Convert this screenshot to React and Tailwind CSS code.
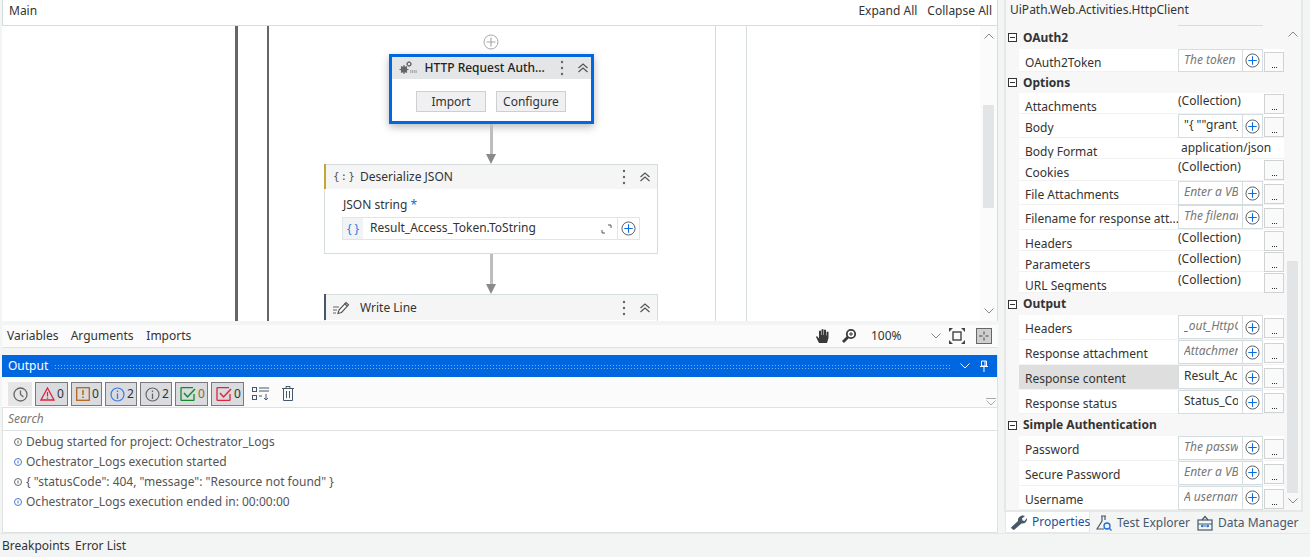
import React from "react";

const Plus = ({ gray = false, size = 16 }) => (
  <svg width={size} height={size} viewBox="0 0 16 16" fill="none">
    <circle cx="8" cy="8" r="7" stroke={gray ? "#a8a8a8" : "#555"} strokeWidth="1" fill="#fff" />
    <path d="M8 3.5v9M3.5 8h9" stroke={gray ? "#a8a8a8" : "#0a6de0"} strokeWidth="1.2" />
  </svg>
);

const Chev = ({ up = false, w = 10, color = "#888" }) => (
  <svg width={w} height="6" viewBox="0 0 10 6" fill="none">
    <path d={up ? "M0.5 5.5L5 1l4.5 4.5" : "M0.5 0.5L5 5l4.5-4.5"} stroke={color} strokeWidth="1" />
  </svg>
);

const DoubleUp = () => (
  <svg width="12" height="10" viewBox="0 0 12 10" fill="none">
    <path d="M1.5 5L6 1l4.5 4M1.5 9L6 5l4.5 4" stroke="#555" strokeWidth="1.2" />
  </svg>
);

const Dots = () => (
  <svg width="4" height="16" viewBox="0 0 4 16">
    <circle cx="2" cy="2" r="1.2" fill="#666" />
    <circle cx="2" cy="8" r="1.2" fill="#666" />
    <circle cx="2" cy="14" r="1.2" fill="#666" />
  </svg>
);

const Arrow = ({ h }) => (
  <div className="flex flex-col items-center" style={{ height: h }}>
    <div className="w-[3px] flex-1 bg-[#bdbdbd]" />
    <svg width="12" height="10" viewBox="0 0 12 10" className="block">
      <path d="M1 0h10L6 10z" fill="#8a8a8a" />
    </svg>
  </div>
);

const Gears = () => (
  <svg width="18" height="14" viewBox="0 0 18 14" fill="none">
    <circle cx="5" cy="8.5" r="3.2" fill="#666" />
    <circle cx="5" cy="8.5" r="1" fill="#e3e5e7" />
    <path d="M5 4v9M.5 8.5h9M2 5.5l6 6M8 5.5l-6 6" stroke="#666" strokeWidth="1.1" />
    <circle cx="10" cy="3" r="1.9" stroke="#666" strokeWidth="1.2" />
    <path d="M10 .3v1M10 4.8v1M7.4 3h1M11.8 3h1" stroke="#666" strokeWidth=".8" />
    <path d="M11 9h7v3h-7z" fill="#aaa" />
    <path d="M12.2 9v3M14.5 9v3M16.8 9v3" stroke="#e3e5e7" strokeWidth=".8" />
  </svg>
);

const PenLines = () => (
  <svg width="17" height="14" viewBox="0 0 17 14" fill="none">
    <path d="M0 6h6M0 9h4M0 12h3" stroke="#666" strokeWidth="1.1" />
    <path d="M5 12.5l1-3.5 7-7.5 2.5 2.300L8.500 11.500z" stroke="#555" strokeWidth="1.200" fill="#fff" />
    <path d="M11.500 2.500l2.600 2.500" stroke="#555" strokeWidth="1.200" />
  </svg>
);

const Row = ({ name, selected = false, children, h }) => (
  <div className="flex bg-white" style={{ height: h }}>
    <div className="w-[13px] shrink-0 bg-[#f7f7f7]" />
    <div className={`w-[159px] shrink-0 pl-[6px] pt-[5px] border-b border-[#f2f2f2] text-[#333] overflow-hidden whitespace-nowrap ${selected ? "bg-[#dedede]" : ""}`}>
      {name}
    </div>
    <div className="flex-1 flex items-start border-b border-[#f2f2f2]">{children}</div>
  </div>
);

const DotsBtn = ({ mt = 3 }) => (
  <div className="w-[20px] h-[20px] ml-[1px] border border-[#cfd3d4] bg-[#fafafa] flex justify-center items-end pb-[3px] gap-[1px]" style={{ marginTop: mt }}>
    <i className="block w-[1px] h-[1px] bg-[#333]" />
    <i className="block w-[1px] h-[1px] bg-[#333]" />
    <i className="block w-[1px] h-[1px] bg-[#333]" />
  </div>
);

const Field = ({ text, italic = true, h }) => (
  <>
    <div className="flex w-[85px] border border-[#d5dde0]" style={{ height: h }}>
      <div className={`w-[63px] shrink-0 pl-[5px] pr-[4px] leading-[20px] overflow-hidden whitespace-nowrap ${italic ? "italic text-[#777]" : "text-[#333]"}`}>
        <div className="overflow-hidden">{text}</div>
      </div>
      <div className="flex-1 border-l border-[#d5dde0] flex items-center justify-center">
        <Plus size={15} />
      </div>
    </div>
    <DotsBtn />
  </>
);

const Collection = () => (
  <>
    <div className="w-[85px] leading-[16px] text-[#333]">(Collection)</div>
    <DotsBtn mt={1} />
  </>
);

const Category = ({ title }) => (
  <div className="flex h-[22px] bg-[#f7f7f7] items-center">
    <div className="w-[13px] shrink-0 pl-[2px]">
      <div className="w-[9px] h-[9px] border border-[#333] flex items-center justify-center bg-white">
        <i className="block w-[5px] h-[1px] bg-[#333]" />
      </div>
    </div>
    <span className="pl-[4px] font-bold text-[#333]">{title}</span>
  </div>
);

const Count = ({ w, n, children, numColor }) => (
  <div className="h-[24px] border border-[#7a7a7a] bg-[#d9dbde] flex items-center pl-[4px] gap-[2px]" style={{ width: w }}>
    {children}
    <span className="text-[12px]" style={{ color: numColor }}>{n}</span>
  </div>
);

const Log = ({ blue, text }) => (
  <div className="flex items-center h-[20px] pl-[10px] text-[#555]">
    <svg width="10" height="10" viewBox="0 0 10 10" fill="none" className="shrink-0 mr-[3px]">
      <circle cx="5" cy="5" r="3.500" stroke={blue ? "#4a78d8" : "#666"} strokeWidth="1" />
      <path d="M5 3.500v3" stroke={blue ? "#4a78d8" : "#666"} strokeWidth="1" />
    </svg>
    <span className="whitespace-nowrap">{text}</span>
  </div>
);

const Scrollbar = ({ top, thumb, gap, thumbW = 11 }) => (
  <div className="w-[17px] shrink-0 bg-[#fbfbfb] flex flex-col items-center">
    <div className="mt-[7px]"><Chev up /></div>
    <div style={{ height: top }} />
    <div className="bg-[#e3e4e6]" style={{ height: thumb, width: thumbW }} />
    <div style={{ height: gap }} />
    <Chev />
  </div>
);

export default function App() {
  return (
    <div className="w-[1310px] h-[557px] overflow-hidden bg-[#f3f5f5] text-[12px] flex flex-col font-['Noto_Sans','Open_Sans',sans-serif]">
      <div className="flex h-[533px]">
        {/* left column */}
        <div className="w-[998px] shrink-0 pl-[2px] flex flex-col">
          <div className="h-[26px] shrink-0 bg-white border-b border-[#d5dde0] border-l border-r flex items-center justify-between pl-[6px] pr-[5px] pb-[3px] text-[#333]">
            <span>Main</span>
            <div className="flex gap-[10px]">
              <span>Expand All</span>
              <span>Collapse All</span>
            </div>
          </div>

          {/* canvas */}
          <div className="h-[295px] shrink-0 flex bg-white overflow-hidden border-r border-[#d5dde0]">
            <div className="relative flex-1 overflow-hidden">
              <div className="absolute left-[233px] top-0 bottom-0 w-[3px] bg-[#666]" />
              <div className="absolute left-[265px] top-0 bottom-0 w-[2px] bg-[#666]" />
              <div className="absolute left-[713px] top-0 bottom-0 w-[1px] bg-[#d5dde0]" />
              <div className="absolute left-[744px] top-0 bottom-0 w-[1px] bg-[#d5dde0]" />

              <div className="relative ml-[322px] w-[334px] flex flex-col items-center pt-[8px]">
                <Plus gray />
                {/* HTTP card */}
                <div className="mt-[4px] w-[205px] h-[70px] border-[3px] border-[#0067e0] bg-white shadow-[0_3px_8px_rgba(0,0,0,0.28)] flex flex-col">
                  <div className="h-[22px] bg-[#e3e5e7] flex items-center pl-[7px] text-[#222]">
                    <Gears />
                    <span className="ml-[8px] w-[125px] text-[12px] font-medium whitespace-nowrap">HTTP Request Auth...</span>
                    <span className="ml-[10px]"><Dots /></span>
                    <span className="ml-[13px]"><DoubleUp /></span>
                  </div>
                  <div className="flex justify-center gap-[10px] pt-[12px]">
                    <div className="w-[70px] h-[21px] border border-[#cfcfd2] bg-[#f0f0f2] flex items-center justify-center text-[#333]">Import</div>
                    <div className="w-[70px] h-[21px] border border-[#cfcfd2] bg-[#f0f0f2] flex items-center justify-center text-[#333]">Configure</div>
                  </div>
                </div>
                <Arrow h={40} />
                {/* Deserialize */}
                <div className="w-[334px] h-[90px] border border-[#d5dde0] bg-white relative">
                  <div className="absolute -left-[1px] -top-[1px] h-[25px] w-[2px] bg-[#c4a732]" />
                  <div className="h-[24px] bg-[#f5f5f5] flex items-center text-[#333]">
                    <span className="w-[35px] pl-[8px] text-[#555] tracking-[1px] font-['DejaVu_Sans_Mono',monospace] text-[11px] whitespace-nowrap">{"{:}"}</span>
                    <span className="w-[262px]">Deserialize JSON</span>
                    <Dots />
                    <span className="ml-[13px]"><DoubleUp /></span>
                  </div>
                  <div className="pl-[18px] pt-[8px] text-[#333] leading-[16px]">
                    JSON string <span className="text-[#0a6de0]">*</span>
                  </div>
                  <div className="ml-[17px] mt-[4px] w-[298px] h-[23px] border border-[#e2e5e7] flex">
                    <div className="w-[20px] bg-[#f2f3f4] text-[#2a7de1] flex items-center justify-center">{"{ }"}</div>
                    <div className="flex-1 pl-[7px] flex items-center text-[#333] pb-[1px]">Result_Access_Token.ToString</div>
                    <div className="w-[22px] flex items-center justify-center">
                      <svg width="11" height="10" viewBox="0 0 11 10" fill="none">
                        <path d="M7 1h3v3M1 6v3h3" stroke="#555" strokeWidth="1" />
                      </svg>
                    </div>
                    <div className="w-[22px] border-l border-[#e2e5e7] flex items-center justify-center">
                      <Plus size={15} />
                    </div>
                  </div>
                </div>
                <Arrow h={40} />
                {/* Write Line */}
                <div className="w-[334px] h-[40px] shrink-0 border border-[#d5dde0] bg-white relative">
                  <div className="absolute -left-[1px] -top-[1px] h-[26px] w-[2px] bg-[#47586a]" />
                  <div className="h-[25px] bg-[#f5f5f5] flex items-center text-[#333]">
                    <span className="w-[35px] pl-[8px]"><PenLines /></span>
                    <span className="w-[262px]">Write Line</span>
                    <Dots />
                    <span className="ml-[13px]"><DoubleUp /></span>
                  </div>
                </div>
              </div>
            </div>
            <Scrollbar top={66} thumb={103} gap={100} />
          </div>

          {/* variables bar */}
          <div className="mt-[4px] h-[23px] shrink-0 bg-[#fbfbfb] border-b border-[#dfe2e3] flex items-center pl-[5px] pr-[6px] text-[#333]">
            <span className="w-[64px]">Variables</span>
            <span className="w-[76px]">Arguments</span>
            <span className="w-[672px]">Imports</span>
            <svg width="16" height="16" viewBox="0 0 16 16" fill="#3a3a3a" className="mr-[10px] shrink-0">
              <path d="M4 15l-3-6 1-1 2 2.500V3l1.300-.5.700 .5v4h.5V1.500L7.800 1l.7.500V7H9V2l1.200-.5.800.5v5.500h.5V4l1.200-.5.800.5v6l-1.500 5z" />
            </svg>
            <svg width="16" height="16" viewBox="0 0 16 16" fill="none" className="mr-[14px] shrink-0">
              <circle cx="10" cy="6" r="4.200" stroke="#3a3a3a" strokeWidth="1.800" />
              <path d="M7 9L2 14" stroke="#3a3a3a" strokeWidth="2.800" />
              <path d="M8 6h4M10 4v4" stroke="#3a3a3a" strokeWidth="1" />
            </svg>
            <span className="w-[60px] shrink-0">100%</span>
            <span className="w-[18px] shrink-0"><Chev /></span>
            <svg width="16" height="16" viewBox="0 0 16 16" fill="none" className="mr-[11px] shrink-0">
              <rect x="4" y="4" width="8" height="8" stroke="#444" strokeWidth="1.400" />
              <path d="M0 0h4L0 4zM16 0h-4l4 4zM0 16h4l-4-4zM16 16h-4l4-4z" fill="#444" />
            </svg>
            <svg width="16" height="16" viewBox="0 0 16 16" className="shrink-0">
              <rect x=".5" y=".5" width="15" height="15" fill="#cfcfcf" stroke="#666" />
              <path d="M6.500 8H3M12.500 8H9.500M8 3.500v3M8 9.500v3" stroke="#444" strokeWidth="1" />
            </svg>
          </div>

          {/* output */}
          <div className="mt-[7px] flex-1 flex flex-col border-r border-[#dfe2e3]">
            <div className="h-[22px] shrink-0 bg-[#0067e0] flex items-center pl-[6px] pr-[8px] text-white">
              <span className="w-[46px]">Output</span>
              <div className="w-[899px] h-[5px] bg-[radial-gradient(circle,#7fb3ef_0.7px,transparent_0.8px)] bg-[length:3px_3px]" />
              <div className="ml-[9px] w-[19px]"><Chev color="#fff" /></div>
              <svg width="10" height="12" viewBox="0 0 10 12" fill="none">
                <path d="M2.500 1h5v5h-5zM1 6.500h8M5 6.500V12M6 1v5" stroke="#fff" strokeWidth="1" />
              </svg>
            </div>
            <div className="h-[30px] shrink-0 bg-[#fbfbfb] flex items-start pt-[5px] pl-[6px] gap-[3px] relative">
              <div className="w-[24px] h-[24px] bg-[#e6e6e6] flex items-center justify-center">
                <svg width="15" height="15" viewBox="0 0 15 15" fill="none">
                  <circle cx="7.500" cy="7.500" r="6.500" stroke="#666" strokeWidth="1.300" />
                  <path d="M7.500 3.500v4l3 2.500" stroke="#666" strokeWidth="1.300" />
                </svg>
              </div>
              <Count w={33} n="0" numColor="#333">
                <svg width="15" height="14" viewBox="0 0 15 14" fill="none">
                  <path d="M7.500 1L14 13H1z" stroke="#e0243c" strokeWidth="1.300" />
                  <path d="M7.500 5v4.500M7.500 10.500v1.200" stroke="#e0243c" strokeWidth="1.200" />
                </svg>
              </Count>
              <Count w={31} n="0" numColor="#333">
                <svg width="14" height="14" viewBox="0 0 14 14" fill="none">
                  <rect x=".7" y=".7" width="12.600" height="12.600" stroke="#b5651d" strokeWidth="1.300" />
                  <path d="M7 3v5M7 9.500V11" stroke="#b5651d" strokeWidth="1.500" />
                </svg>
              </Count>
              <Count w={32} n="2" numColor="#333">
                <svg width="15" height="15" viewBox="0 0 15 15" fill="none">
                  <circle cx="7.500" cy="7.500" r="6.500" stroke="#3f76e0" strokeWidth="1.200" />
                  <path d="M7.500 6.500V12M7.500 3.500v1.500" stroke="#3f76e0" strokeWidth="1.300" />
                </svg>
              </Count>
              <Count w={32} n="2" numColor="#333">
                <svg width="15" height="15" viewBox="0 0 15 15" fill="none">
                  <circle cx="7.500" cy="7.500" r="6.500" stroke="#666" strokeWidth="1.200" />
                  <path d="M7.500 6.500V12M7.500 3.500v1.500" stroke="#666" strokeWidth="1.300" />
                </svg>
              </Count>
              <Count w={33} n="0" numColor="#8a6a2a">
                <svg width="16" height="14" viewBox="0 0 16 14" fill="none">
                  <path d="M14 7v5.500a1 1 0 0 1-1 1H2a1 1 0 0 1-1-1v-11a1 1 0 0 1 1-1h11" stroke="#118a2a" strokeWidth="1.300" />
                  <path d="M4 6l3.500 4L15 2" stroke="#118a2a" strokeWidth="1.500" />
                </svg>
              </Count>
              <Count w={33} n="0" numColor="#333">
                <svg width="16" height="14" viewBox="0 0 16 14" fill="none">
                  <path d="M14 7v5.500a1 1 0 0 1-1 1H2a1 1 0 0 1-1-1v-11a1 1 0 0 1 1-1h11" stroke="#e0243c" strokeWidth="1.300" />
                  <path d="M4 6l3.500 4L15 2" stroke="#e0243c" strokeWidth="1.500" />
                </svg>
              </Count>
              <svg width="17" height="14" viewBox="0 0 17 14" fill="none" className="ml-[5px] mt-[5px]">
                <rect x=".5" y=".5" width="4" height="4" stroke="#47586a" />
                <rect x=".5" y="8.500" width="4" height="4" stroke="#47586a" />
                <path d="M7 1h10M7 4h10M7 9h3M14 7v6M12 11l2 2 2-2" stroke="#47586a" strokeWidth="1" />
              </svg>
              <svg width="12" height="15" viewBox="0 0 12 15" fill="none" className="ml-[10px] mt-[4px]">
                <path d="M0 2.500h12M4 2.500V.5h4v2M1.500 2.500v12h9v-12M4.500 5v7M7.500 5v7" stroke="#47586a" strokeWidth="1" />
              </svg>
              <div className="absolute right-[1px] bottom-[1px] flex flex-col gap-[1px]">
                <i className="block w-[10px] h-[1px] bg-[#aaa]" />
                <Chev color="#aaa" />
              </div>
            </div>
            <div className="h-[24px] shrink-0 bg-white border-y border-l border-[#dfe2e3] flex items-center pl-[5px] italic text-[#777]">Search</div>
            <div className="flex-1 bg-white border-l border-[#dfe2e3] border-b pt-[1px]">
              <Log text="Debug started for project: Ochestrator_Logs" />
              <Log blue text="Ochestrator_Logs execution started" />
              <Log text={'{ "statusCode": 404, "message": "Resource not found" }'} />
              <Log blue text="Ochestrator_Logs execution ended in: 00:00:00" />
            </div>
          </div>
        </div>

        {/* right column */}
        <div className="ml-[6px] w-[299px] shrink-0 flex flex-col">
          <div className="h-[25px] shrink-0 pl-[4px] pt-[1px] bg-[#f7f7f7] text-[#333] border-x-2 border-[#e6e8e8]">UiPath.Web.Activities.HttpClient</div>
          <div className="h-[487px] shrink-0 border-x-2 border-b-2 border-[#e6e8e8] flex bg-[#f7f7f7]">
            <div className="w-[278px] shrink-0 flex flex-col">
              <div className="h-[2px] flex">
                <div className="ml-[172px] w-[85px] border-t border-[#d5dde0]" />
              </div>
              <Category title="OAuth2" />
              <Row name="OAuth2Token" h={23}><Field text="The token" h={23} /></Row>
              <Category title="Options" />
              <Row name="Attachments" h={21}><Collection /></Row>
              <Row name="Body" h={24}><Field text={'"{ ""grant_type'} italic={false} h={24} /></Row>
              <Row name="Body Format" h={21}><span className="pl-[3px] text-[#333] leading-[20px]">application/json</span></Row>
              <Row name="Cookies" h={22}><Collection /></Row>
              <Row name="File Attachments" h={24}><Field text="Enter a VB expr" h={24} /></Row>
              <Row name="Filename for response att..." h={25}><Field text="The filename" h={24} /></Row>
              <Row name="Headers" h={21}><Collection /></Row>
              <Row name="Parameters" h={21}><Collection /></Row>
              <Row name="URL Segments" h={21}><Collection /></Row>
              <Category title="Output" />
              <Row name="Headers" h={25}><Field text="_out_HttpClient" h={24} /></Row>
              <Row name="Response attachment" h={25}><Field text="Attachment" h={24} /></Row>
              <Row name="Response content" selected h={25}><Field text="Result_Access" italic={false} h={24} /></Row>
              <Row name="Response status" h={24}><Field text="Status_Code" italic={false} h={24} /></Row>
              <Category title="Simple Authentication" />
              <Row name="Password" h={25}><Field text="The password" h={24} /></Row>
              <Row name="Secure Password" h={25}><Field text="Enter a VB expr" h={24} /></Row>
              <Row name="Username" h={24}><Field text="A username" h={24} /></Row>
            </div>
            <div className="flex-1 flex flex-col items-center">
              <div className="mt-[6px]"><Chev up /></div>
              <div className="h-[224px]" />
              <div className="w-[11px] h-[232px] bg-[#e3e4e6]" />
              <div className="h-[5px]" />
              <Chev />
            </div>
          </div>
          <div className="flex h-[21px] shrink-0 pl-[1px] items-center text-[#47586a]">
            <div className="w-[85px] h-[21px] bg-white border border-[#e6e8e8] border-t-0 flex items-center pl-[5px] gap-[5px] text-[#1a4fa0]">
              <svg width="16" height="15" viewBox="0 0 16 15" fill="#47586a" className="shrink-0">
                <path d="M1 14l-1-1.500 7-6.500C6.500 3.500 8.500.5 12 .5c.8 0 1.500.2 2 .5l-3 2.500.5 2 2 .5L16 3c.4 3-1.500 6-5.500 5.500L3 15z" />
              </svg>
              Properties
            </div>
            <div className="ml-[6px] flex items-center gap-[5px] w-[99px]">
              <svg width="16" height="16" viewBox="0 0 16 16" fill="none" className="shrink-0">
                <path d="M5 1h5M6 1v5L1 14h7" stroke="#47586a" strokeWidth="1.200" />
                <path d="M9 1v4" stroke="#47586a" strokeWidth="1.200" />
                <circle cx="11" cy="11" r="3" stroke="#1a6fd8" strokeWidth="1.300" />
                <path d="M13 13l2.500 2.500" stroke="#1a6fd8" strokeWidth="1.300" />
              </svg>
              Test Explorer
            </div>
            <div className="ml-[2px] flex items-center gap-[5px]">
              <svg width="16" height="16" viewBox="0 0 16 16" fill="none" className="shrink-0">
                <rect x="1" y="5" width="14" height="10" stroke="#47586a" strokeWidth="1.200" />
                <path d="M5 5l3-3.500L11 5M1 9h14" stroke="#47586a" strokeWidth="1.200" />
                <path d="M4 11h8M6 10l-2 1 2 1M10 10l2 1-2 1" stroke="#1a6fd8" strokeWidth="1" />
              </svg>
              Data Manager
            </div>
          </div>
        </div>
      </div>

      {/* bottom bar */}
      <div className="h-[24px] shrink-0 border-t border-[#e6e8e8] flex items-center pl-[2px] text-[#333]">
        <span className="w-[73px]">Breakpoints</span>
        <span>Error List</span>
      </div>
    </div>
  );
}
